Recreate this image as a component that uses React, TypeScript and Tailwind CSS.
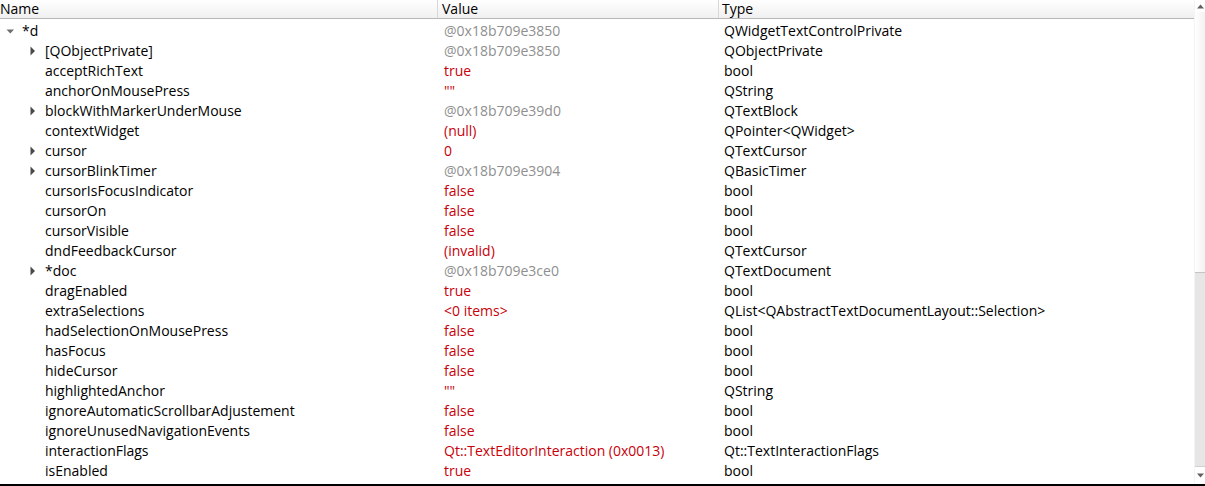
import React from 'react';

type Row = {
  name: string;
  value: string;
  type: string;
  tone: 'addr' | 'red';
  level: 0 | 1;
  arrow?: 'open' | 'closed';
};

const ROWS: Row[] = [
  { name: '*d', value: '@0x18b709e3850', type: 'QWidgetTextControlPrivate', tone: 'addr', level: 0, arrow: 'open' },
  { name: '[QObjectPrivate]', value: '@0x18b709e3850', type: 'QObjectPrivate', tone: 'addr', level: 1, arrow: 'closed' },
  { name: 'acceptRichText', value: 'true', type: 'bool', tone: 'red', level: 1 },
  { name: 'anchorOnMousePress', value: '""', type: 'QString', tone: 'red', level: 1 },
  { name: 'blockWithMarkerUnderMouse', value: '@0x18b709e39d0', type: 'QTextBlock', tone: 'addr', level: 1, arrow: 'closed' },
  { name: 'contextWidget', value: '(null)', type: 'QPointer<QWidget>', tone: 'red', level: 1 },
  { name: 'cursor', value: '0', type: 'QTextCursor', tone: 'red', level: 1, arrow: 'closed' },
  { name: 'cursorBlinkTimer', value: '@0x18b709e3904', type: 'QBasicTimer', tone: 'addr', level: 1, arrow: 'closed' },
  { name: 'cursorIsFocusIndicator', value: 'false', type: 'bool', tone: 'red', level: 1 },
  { name: 'cursorOn', value: 'false', type: 'bool', tone: 'red', level: 1 },
  { name: 'cursorVisible', value: 'false', type: 'bool', tone: 'red', level: 1 },
  { name: 'dndFeedbackCursor', value: '(invalid)', type: 'QTextCursor', tone: 'red', level: 1 },
  { name: '*doc', value: '@0x18b709e3ce0', type: 'QTextDocument', tone: 'addr', level: 1, arrow: 'closed' },
  { name: 'dragEnabled', value: 'true', type: 'bool', tone: 'red', level: 1 },
  { name: 'extraSelections', value: '<0 items>', type: 'QList<QAbstractTextDocumentLayout::Selection>', tone: 'red', level: 1 },
  { name: 'hadSelectionOnMousePress', value: 'false', type: 'bool', tone: 'red', level: 1 },
  { name: 'hasFocus', value: 'false', type: 'bool', tone: 'red', level: 1 },
  { name: 'hideCursor', value: 'false', type: 'bool', tone: 'red', level: 1 },
  { name: 'highlightedAnchor', value: '""', type: 'QString', tone: 'red', level: 1 },
  { name: 'ignoreAutomaticScrollbarAdjustement', value: 'false', type: 'bool', tone: 'red', level: 1 },
  { name: 'ignoreUnusedNavigationEvents', value: 'false', type: 'bool', tone: 'red', level: 1 },
  { name: 'interactionFlags', value: 'Qt::TextEditorInteraction (0x0013)', type: 'Qt::TextInteractionFlags', tone: 'red', level: 1 },
  { name: 'isEnabled', value: 'true', type: 'bool', tone: 'red', level: 1 },
];

function Arrow({ kind }: { kind: 'open' | 'closed' }) {
  if (kind === 'open') {
    return (
      <svg width="9" height="9" viewBox="0 0 9 9">
        <path d="M0.5 2.5 L8 2.5 L4.25 6.5 Z" fill="#6e6e6e" />
      </svg>
    );
  }
  return (
    <svg width="9" height="10" viewBox="0 0 9 10">
      <path d="M2.5 0.5 L7 5 L2.5 9.5 Z" fill="#4a4a4a" />
    </svg>
  );
}

export default function App() {
  return (
    <div
      className="w-[1205px] h-[486px] bg-white flex flex-col overflow-hidden text-[14px] text-black"
      style={{ fontFamily: '"Open Sans", "Noto Sans", sans-serif' }}
    >
      <div className="flex flex-1 min-h-0">
        <div className="flex-1 flex flex-col min-w-0">
          {/* header */}
          <div className="h-[19px] flex bg-gradient-to-b from-white to-[#f0f0f0] border-b border-[#b8b8b8] leading-[18px]">
            <div className="w-[438px] border-r border-[#d8d8d8]">Name</div>
            <div className="w-[281px] border-r border-[#d8d8d8] pl-[4px]">Value</div>
            <div className="flex-1 pl-[3px]">Type</div>
          </div>
          {/* rows */}
          <div className="flex flex-col pt-[2px]">
            {ROWS.map((r, i) => (
              <div key={i} className="h-[20px] flex items-center leading-[20px] whitespace-nowrap">
                <div className="w-[438px] flex items-center">
                  <div className={r.level === 0 ? 'w-[22px] flex justify-center pr-[2px]' : 'w-[45px] flex justify-end pr-[8px]'}>
                    {r.arrow && <Arrow kind={r.arrow} />}
                  </div>
                  <span>{r.name}</span>
                </div>
                <div className={`w-[281px] pl-[6px] ${r.tone === 'addr' ? 'text-[#8f8f8f]' : 'text-[#c8000a]'}`}>
                  {r.value}
                </div>
                <div className="flex-1 pl-[5px]">{r.type}</div>
              </div>
            ))}
          </div>
        </div>
        {/* scrollbar */}
        <div className="w-[11px] flex flex-col bg-[#e6e6e6] border-l border-[#f4f4f4]">
          <div className="h-[12px] flex items-center justify-center bg-white">
            <svg width="7" height="5" viewBox="0 0 7 5">
              <path d="M0 4.5 L3.5 0.5 L7 4.5 Z" fill="#606060" />
            </svg>
          </div>
          <div className="h-[261px] bg-gradient-to-r from-white to-[#f2f2f2] border-b border-[#c4c4c4]" />
          <div className="flex-1" />
          <div className="h-[18px] flex items-center justify-center bg-white border-t border-[#d0d0d0]">
            <svg width="7" height="5" viewBox="0 0 7 5">
              <path d="M0 0.5 L7 0.5 L3.5 4.5 Z" fill="#606060" />
            </svg>
          </div>
        </div>
      </div>
      <div className="h-[2px] bg-black" />
    </div>
  );
}
